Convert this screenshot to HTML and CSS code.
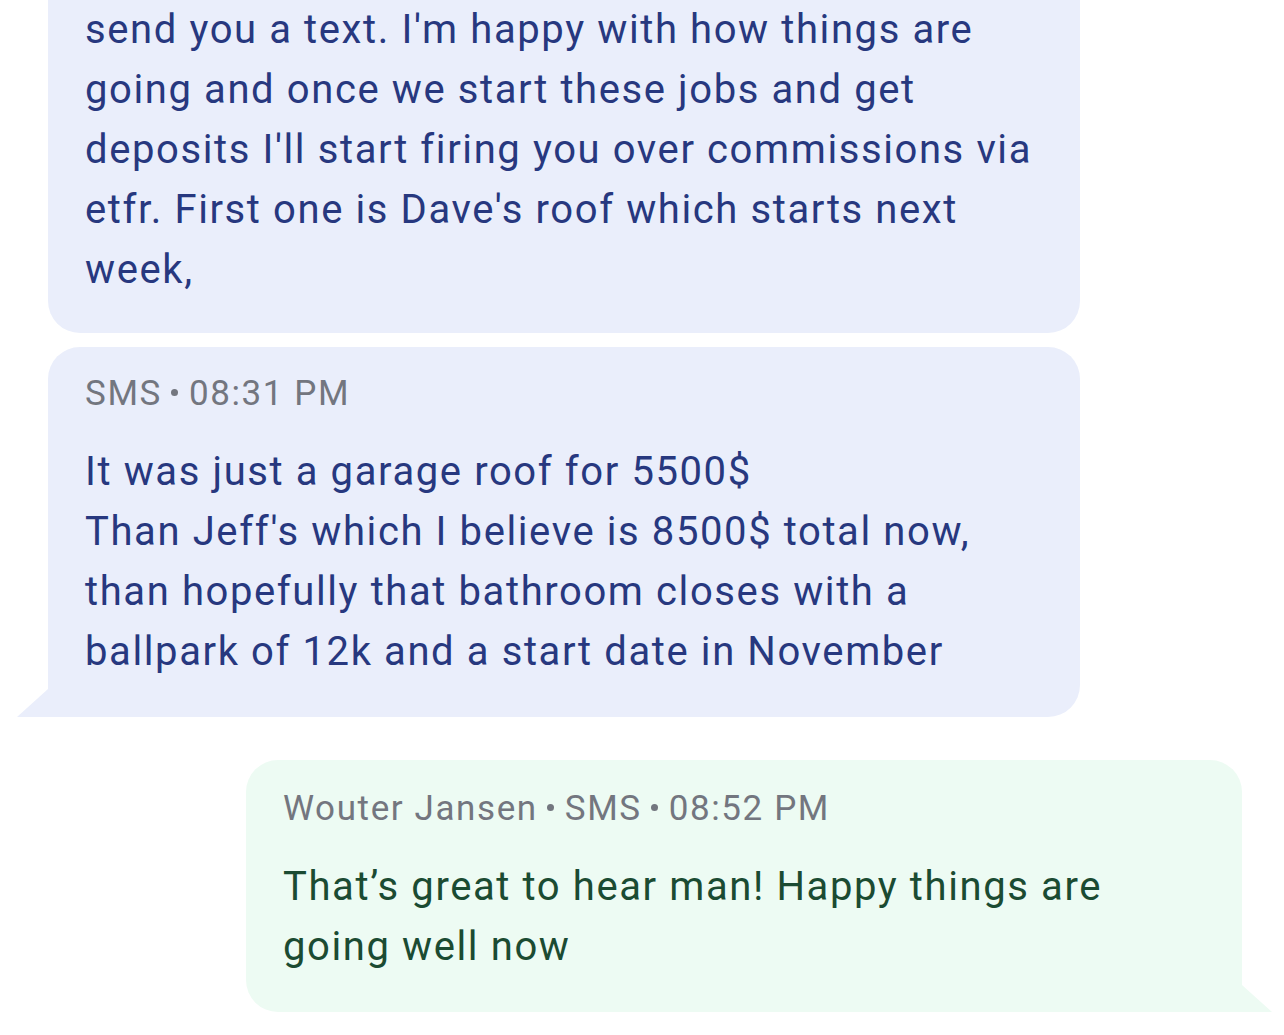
FILE: index.html
```html
<!DOCTYPE html>
<html lang="en">
<head>
    <meta charset="UTF-8">
    <meta name="viewport" content="width=device-width, initial-scale=1.0">
    <title>Conversation</title>
    <link rel="stylesheet" href="styles.css">
</head>
<body>

<!-- Message thread -->
<div class="thread">

    <!-- Incoming message (continued from above) -->
    <div class="bubble incoming first">
        <p class="body">send you a text. I'm happy with how things are<br>
        going and once we start these jobs and get<br>
        deposits I'll start firing you over commissions via<br>
        etfr. First one is Dave's roof which starts next<br>
        week,</p>
    </div>

    <!-- Incoming message with tail -->
    <div class="bubble incoming last">
        <p class="meta">SMS<span class="dot"></span>08:31 PM</p>
        <p class="body">It was just a garage roof for 5500$<br>
        Than Jeff's which I believe is 8500$ total now,<br>
        than hopefully that bathroom closes with a<br>
        ballpark of 12k and a start date in November</p>
    </div>

    <!-- Outgoing message -->
    <div class="bubble outgoing">
        <p class="meta">Wouter Jansen<span class="dot"></span>SMS<span class="dot"></span>08:52 PM</p>
        <p class="body">That’s great to hear man! Happy things are<br>
        going well now</p>
    </div>

</div>

</body>
</html>
```

FILE: styles.css
```css
body {
    margin: 0;
    background-color: #ffffff;
    font-family: 'Roboto', 'Noto Sans', sans-serif;
}

.thread {
    display: flex;
    flex-direction: column;
    width: 1284px;
    height: 1035px;
    overflow: hidden;
}

/* Bubbles */
.bubble {
    position: relative;
    box-sizing: border-box;
    border-radius: 32px;
}

.incoming {
    margin-left: 48px;
    width: 1032px;
    padding: 0 37px;
    background-color: #eaeefb;
    color: #27387f;
}

.incoming.first {
    border-radius: 0 0 32px 32px;
    padding-bottom: 33px;
}

.incoming.last {
    margin-top: 14px;
    padding-top: 27px;
    padding-bottom: 35px;
    border-bottom-left-radius: 0;
}

/* tail on the left */
.incoming.last::after {
    content: "";
    position: absolute;
    left: -31px;
    bottom: 0;
    width: 31px;
    height: 28px;
    background-color: #eaeefb;
    clip-path: polygon(100% 0, 100% 100%, 0 100%);
}

.outgoing {
    margin-top: 43px;
    margin-left: 246px;
    width: 996px;
    padding: 29px 38px 35px 37px;
    background-color: #edfbf3;
    color: #1b4b32;
    border-bottom-right-radius: 0;
}

/* tail on the right */
.outgoing::after {
    content: "";
    position: absolute;
    right: -30px;
    bottom: 0;
    width: 30px;
    height: 27px;
    background-color: #edfbf3;
    clip-path: polygon(0 0, 100% 100%, 0 100%);
}

/* Text */
.body {
    margin: 0;
    font-size: 40px;
    line-height: 60px;
    letter-spacing: 1.6px;
}

.meta {
    margin: 0 0 28px 0;
    font-size: 35px;
    line-height: 40px;
    letter-spacing: 1.6px;
    color: #73767f;
}

.dot {
    display: inline-block;
    width: 7px;
    height: 7px;
    margin: 0 11px 0 9px;
    border-radius: 50%;
    background-color: #73767f;
    vertical-align: 9px;
}
```
